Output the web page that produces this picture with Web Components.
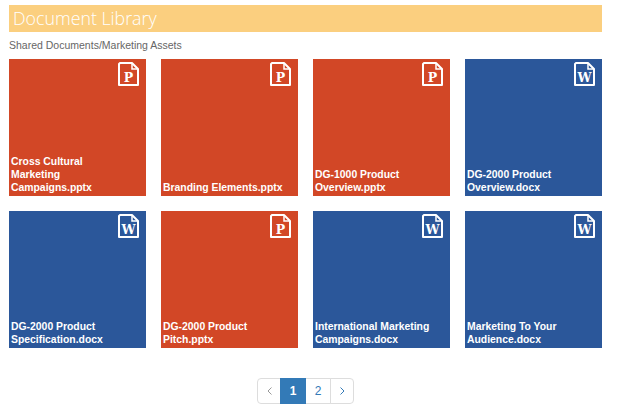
<!DOCTYPE html>
<html>
<head>
<meta charset="utf-8">
<title>Document Library</title>
<style>
    body { margin: 0; background: #fff; font-family: "Liberation Sans", Arial, sans-serif; }
</style>
</head>
<body>
<doc-library heading="Document Library" path="Shared Documents/Marketing Assets">
    <doc-tile type="p">Cross Cultural<br>Marketing<br>Campaigns.pptx</doc-tile>
    <doc-tile type="p">Branding Elements.pptx</doc-tile>
    <doc-tile type="p">DG-1000 Product<br>Overview.pptx</doc-tile>
    <doc-tile type="w">DG-2000 Product<br>Overview.docx</doc-tile>
    <doc-tile type="w">DG-2000 Product<br>Specification.docx</doc-tile>
    <doc-tile type="p">DG-2000 Product<br>Pitch.pptx</doc-tile>
    <doc-tile type="w">International Marketing<br>Campaigns.docx</doc-tile>
    <doc-tile type="w">Marketing To Your<br>Audience.docx</doc-tile>
</doc-library>
<script>
class DocLibrary extends HTMLElement {
    constructor() {
        super();
        this.attachShadow({ mode: 'open' });
        this.shadowRoot.innerHTML = `
            <style>
                :host {
                    display: block;
                    padding: 5px 17px 0 9px;
                }
                h1 {
                    margin: 0;
                    height: 27px;
                    padding-left: 4px;
                    background-color: #fbcf7f;
                    color: white;
                    font: 300 17.8px/27px 'Open Sans', sans-serif;
                }
                p {
                    margin: 0;
                    height: 27px;
                    line-height: 27px;
                    font-size: 10.5px;
                    color: #666;
                }
                .grid {
                    display: grid;
                    grid-template-columns: repeat(4, 137px);
                    column-gap: 15px;
                    row-gap: 15px;
                }
            </style>
            <h1></h1>
            <p></p>
            <div class="grid"><slot></slot></div>
            <page-nav></page-nav>
        `;
        this.shadowRoot.querySelector('h1').textContent = this.getAttribute('heading');
        this.shadowRoot.querySelector('p').textContent = this.getAttribute('path');
    }
}
customElements.define('doc-library', DocLibrary);

class DocTile extends HTMLElement {
    constructor() {
        super();
        this.attachShadow({ mode: 'open' });
        const letter = this.getAttribute('type') === 'w' ? 'W' : 'P';
        this.shadowRoot.innerHTML = `
            <style>
                :host {
                    display: flex;
                    justify-content: flex-end;
                    flex-direction: column;
                    height: 137px;
                    box-sizing: border-box;
                    padding: 0 2px 2px;
                    background-color: #d24726;
                    color: white;
                    font-size: 10.4px;
                    font-weight: bold;
                    line-height: 13px;
                    position: relative;
                }
                :host([type="w"]) {
                    background-color: #2b579a;
                }
                svg {
                    position: absolute;
                    top: 3px;
                    right: 7px;
                }
                text {
                    font: bold 12.5px 'DejaVu Serif', serif;
                    fill: white;
                }
            </style>
            <svg width="21" height="24" viewBox="0 0 21 24">
                <path d="M2 1H14L20 7V23H1V2Z" fill="none" stroke="white" stroke-width="2" stroke-linejoin="round"/>
                <path d="M14 2V7H19" fill="none" stroke="white" stroke-width="1.5"/>
                <text x="10.5" y="19.5" text-anchor="middle">${letter}</text>
            </svg>
            <div><slot></slot></div>
        `;
    }
}
customElements.define('doc-tile', DocTile);

class PageNav extends HTMLElement {
    constructor() {
        super();
        this.attachShadow({ mode: 'open' });
        this.shadowRoot.innerHTML = `
            <style>
                :host {
                    display: flex;
                    justify-content: center;
                    margin-top: 30px;
                }
                a {
                    display: flex;
                    align-items: center;
                    justify-content: center;
                    box-sizing: border-box;
                    height: 26px;
                    border: 1px solid #ddd;
                    margin-left: -1px;
                    font-size: 12px;
                    color: #337ab7;
                    background: white;
                    width: 26px;
                }
                a:first-of-type {
                    border-radius: 4px 0 0 4px;
                    margin-left: 0;
                    width: 24px;
                    color: #999;
                }
                a:last-of-type {
                    border-radius: 0 4px 4px 0;
                    width: 24px;
                }
                a.active {
                    position: relative;
                    z-index: 1;
                    background-color: #337ab7;
                    border-color: #337ab7;
                    color: white;
                    font-weight: bold;
                }
                svg { fill: none; stroke: currentColor; stroke-width: 1; }
            </style>
            <a><svg width="5" height="8" viewBox="0 0 5 8"><path d="M4.5 .5L1 4L4.5 7.5"/></svg></a>
            <a class="active">1</a>
            <a>2</a>
            <a><svg width="5" height="8" viewBox="0 0 5 8"><path d="M.5 .5L4 4L.5 7.5"/></svg></a>
        `;
    }
}
customElements.define('page-nav', PageNav);
</script>
</body>
</html>
